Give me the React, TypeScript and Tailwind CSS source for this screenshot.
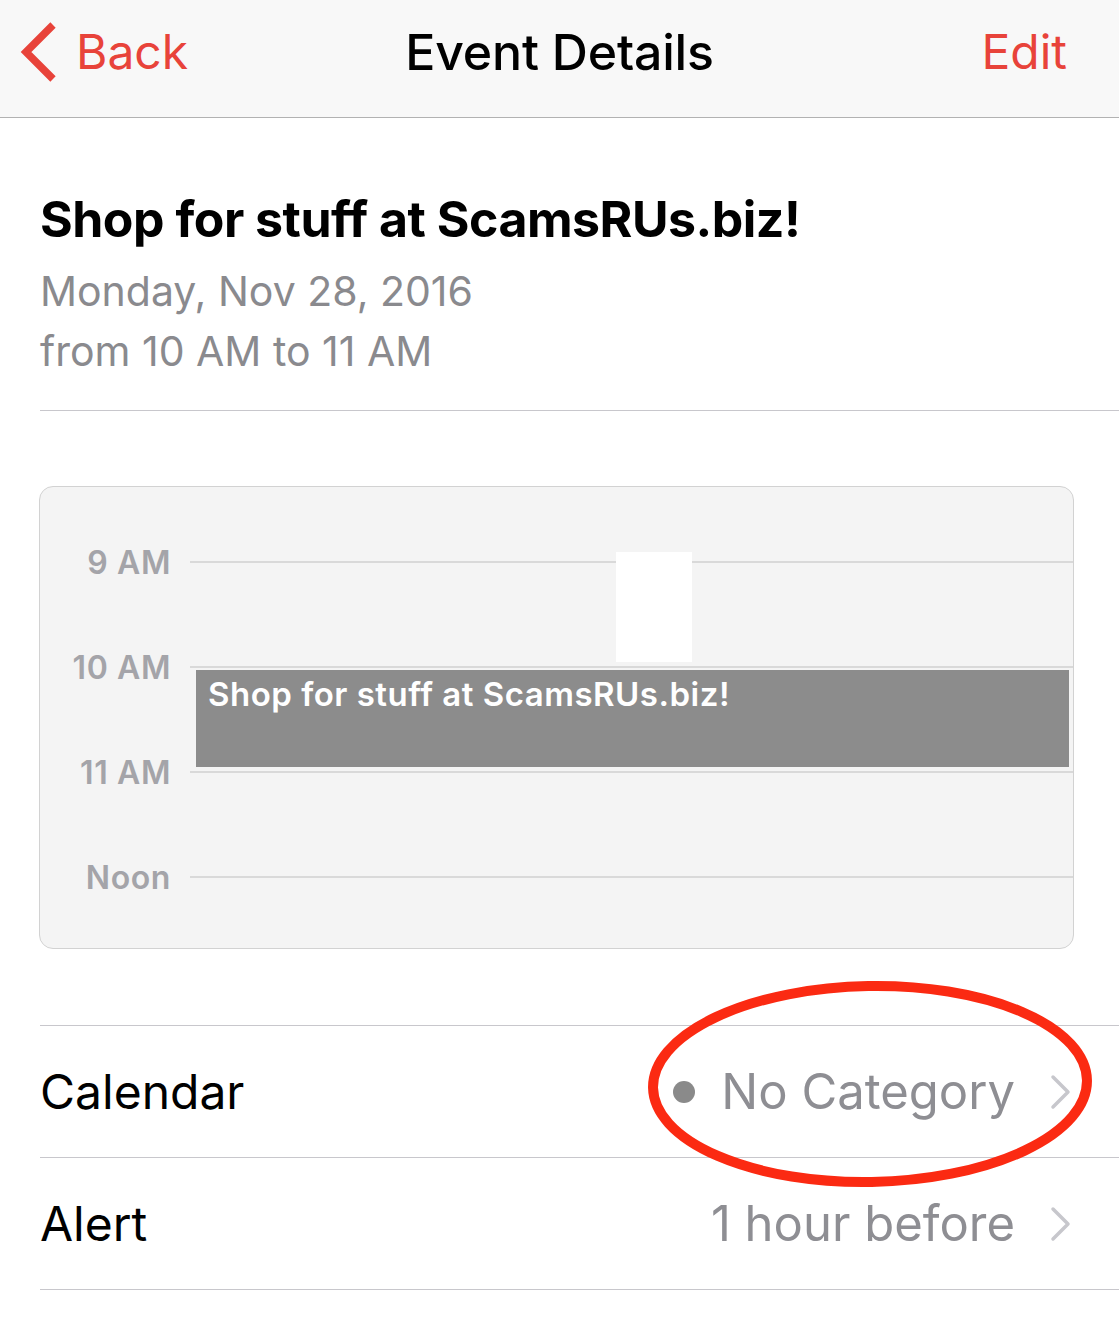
import React from 'react';

const font = { fontFamily: 'Inter, "Noto Sans", sans-serif' };

function Chevron({ className }: { className?: string }) {
  return (
    <svg viewBox="0 0 24 36" className={className} fill="none">
      <path d="M4 3 L19 18 L4 33" stroke="currentColor" strokeWidth="3.5" strokeLinecap="round" strokeLinejoin="round" />
    </svg>
  );
}

function HourLine({ label, last }: { label: string; last?: boolean }) {
  return (
    <div className={last ? 'flex h-[1px] items-start' : 'flex h-[105px] items-start'}>
      <div className="w-[131px] -mt-[22px] text-right text-[32px] font-semibold tracking-[0.6px] text-[#a4a4a9]">{label}</div>
      <div className="ml-[19px] flex-1 border-t-2 border-[#d9d9d9]" />
    </div>
  );
}

function Row({ label, value, dot }: { label: string; value: string; dot?: boolean }) {
  return (
    <div className="ml-[40px] flex h-[132px] items-center border-b border-[#c8c7cc]">
      <div className="text-[48px] text-black">{label}</div>
      <div className="ml-auto flex items-center text-[49px] text-[#8e8e93]">
        {dot && <span className="mr-[26px] h-[22px] w-[22px] rounded-full bg-[#8a8a8a]" />}
        <span>{value}</span>
        <Chevron className="ml-[34px] mr-[46px] h-[36px] w-[24px] text-[#c7c7cc]" />
      </div>
    </div>
  );
}

export default function App() {
  return (
    <div className="min-h-[1323px] w-[1119px] bg-white" style={font}>
      <header className="grid h-[118px] grid-cols-[1fr_auto_1fr] items-center border-b border-[#b2b2b2] bg-[#f8f8f8] pb-[14px]">
        <div className="flex items-center text-[#e8433a]">
          <svg viewBox="0 0 40 62" className="ml-[18px] h-[62px] w-[40px]" fill="none">
            <path d="M35 4 L8 31 L35 58" stroke="currentColor" strokeWidth="7.5" strokeLinejoin="miter" />
          </svg>
          <span className="ml-[18px] text-[48px] leading-none">Back</span>
        </div>
        <div className="text-[50px] font-medium leading-none tracking-[-0.2px] text-black">Event Details</div>
        <div className="pr-[52px] text-right text-[48px] leading-none text-[#e8433a]">Edit</div>
      </header>

      <section className="ml-[40px] border-b border-[#c8c7cc] pb-[29px] pt-[68px]">
        <h1 className="text-[50px] font-bold leading-[66px] tracking-[-0.5px] text-black">Shop for stuff at ScamsRUs.biz!</h1>
        <div className="mt-[9px] text-[41px] leading-[60px] text-[#8a8a8e]">
          <div>Monday, Nov 28, 2016</div>
          <div>from 10 AM to 11 AM</div>
        </div>
      </section>

      <div className="px-[39px] pt-[75px] pb-[76px] pr-[45px]">
        <div className="overflow-hidden rounded-[14px] border border-[#d2d2d2] bg-[#f4f4f4] pt-[74px] pb-[71px]">
          <div className="relative">
            <HourLine label="9 AM" />
            <HourLine label="10 AM" />
            <HourLine label="11 AM" />
            <HourLine label="Noon" last />
            <div className="absolute left-[576px] top-[-9px] h-[110px] w-[76px] bg-white" />
            <div className="absolute left-[156px] right-[4px] top-[109px] h-[97px] bg-[#8c8c8c] px-[12px] text-[33px] font-semibold tracking-[0.5px] text-white">
              Shop for stuff at ScamsRUs.biz!
            </div>
          </div>
        </div>
      </div>

      <div className="relative ml-[40px] border-t border-[#c8c7cc]">
        <div className="-ml-[40px]">
          <Row label="Calendar" value="No Category" dot />
          <Row label="Alert" value="1 hour before" />
        </div>
        <svg className="pointer-events-none absolute left-[608px] top-[-46px] h-[210px] w-[450px]" viewBox="0 0 450 210" fill="none">
          <ellipse cx="222" cy="104" rx="217" ry="98" stroke="#fb2a12" strokeWidth="10" transform="rotate(-1 222 104)" />
        </svg>
      </div>
    </div>
  );
}
